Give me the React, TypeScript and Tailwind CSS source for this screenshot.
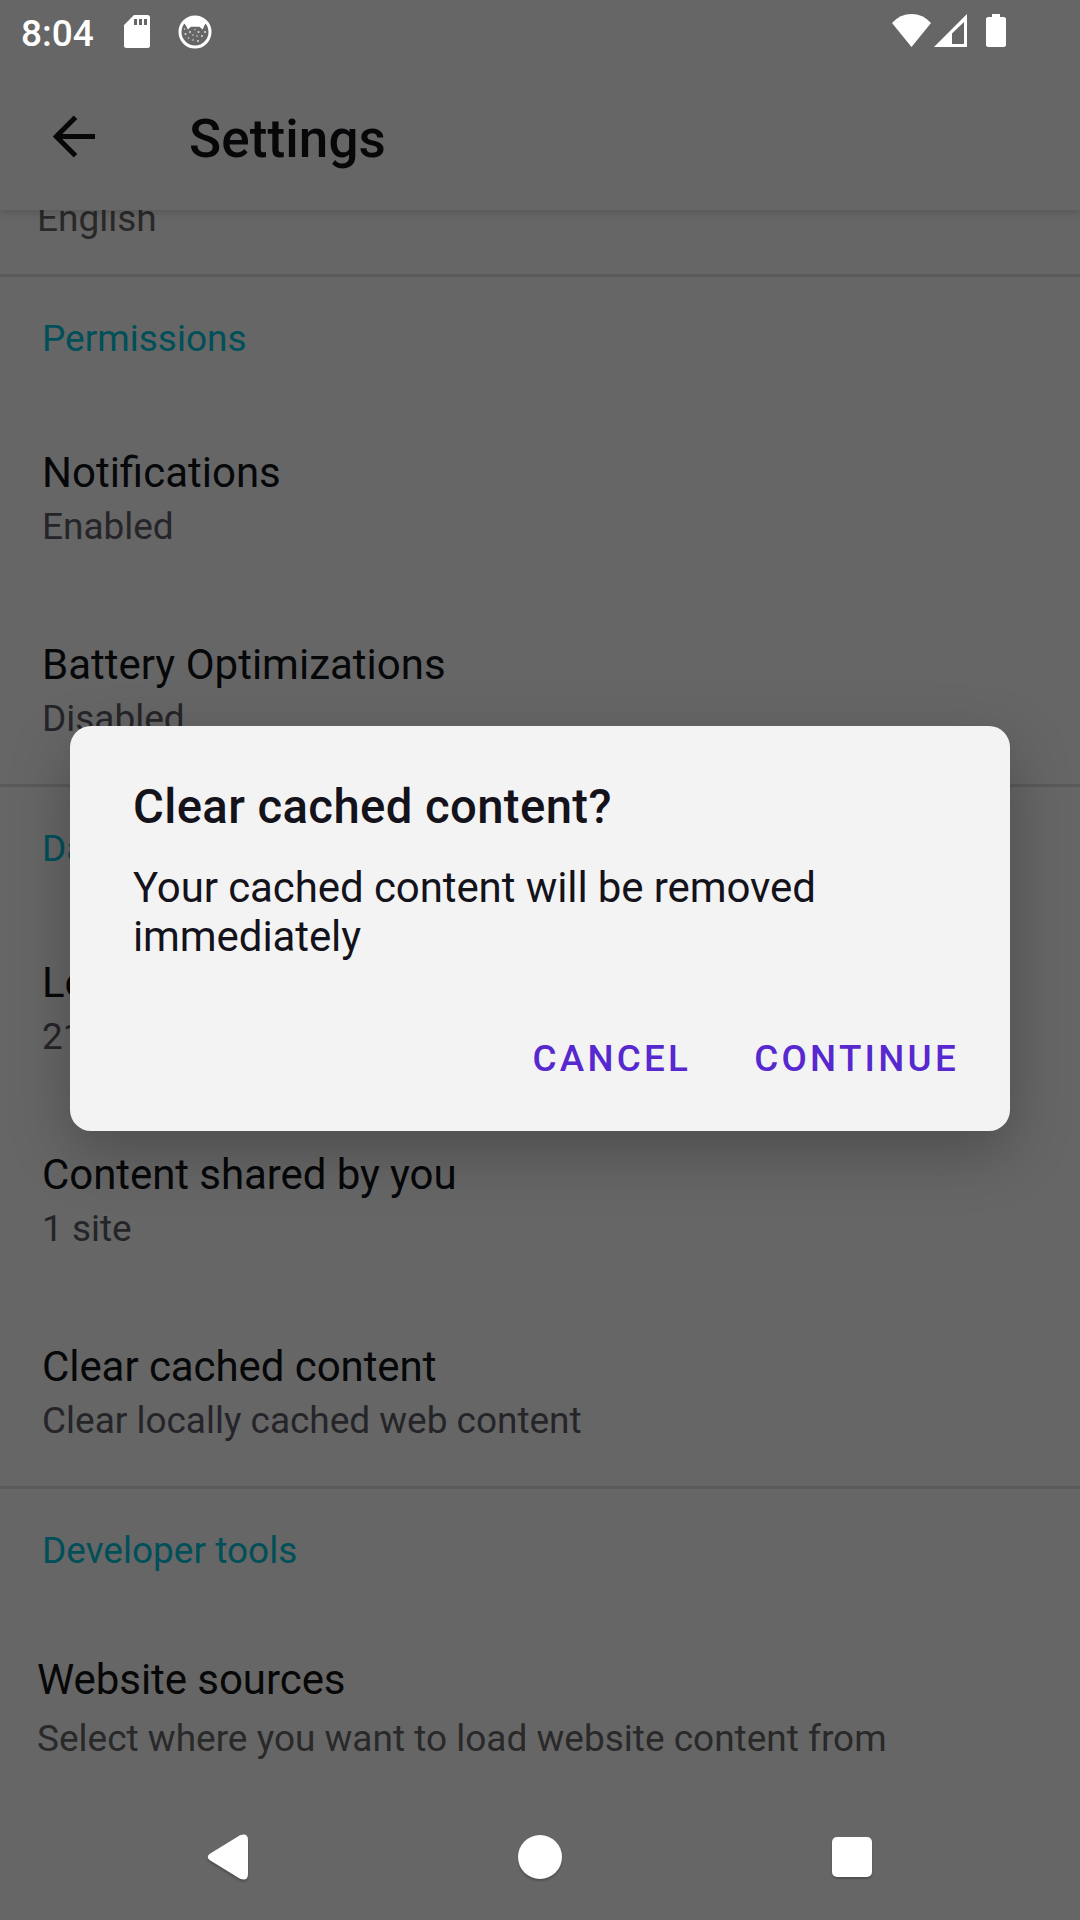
import React from "react";

type Item = { title: string; detail: string; tight?: boolean };

function Section({ label, items }: { label: string; items: Item[] }) {
  return (
    <section className="border-t-3 border-[#5a5a5a] px-[42px] pb-px">
      <h2 className="pt-10 pb-[39px] text-[37px] leading-[43px] text-[#004f59]">{label}</h2>
      {items.map((item) => (
        <div key={item.title} className="flex flex-col gap-[7px] pt-[49px] pb-[43px]">
          <div
            className={
              item.tight
                ? "text-[42px] leading-[50px] tracking-[-0.07px] text-[#060709]"
                : "text-[42px] leading-[50px] text-[#060709]"
            }
          >
            {item.title}
          </div>
          <div className="text-[37px] leading-[43px] tracking-[-0.02px] text-[#252529]">{item.detail}</div>
        </div>
      ))}
    </section>
  );
}

function StatusBar() {
  return (
    <div className="flex h-[63px] shrink-0 items-start text-white">
      <div className="w-[124px] pt-3 pl-[21px] text-[37px] leading-[43px] font-medium">8:04</div>
      <svg className="mt-[15px] h-[33px] w-[26px]" viewBox="0 0 26 33" fill="white">
        <path
          fillRule="evenodd"
          d="M10 0H23.5Q26 0 26 2.5V30.500Q26 33 23.500 33H2.500Q0 33 0 30.500V10ZM10 4V10H13V4ZM15 4V10H18V4ZM20 4V10H23V4Z"
        />
      </svg>
      <svg className="mt-[15px] ml-7 h-[34px] w-[34px]" viewBox="0 0 34 34">
        <circle cx="17" cy="17" r="15" fill="none" stroke="white" strokeWidth="3" />
        <path d="M4 8Q9 1 17 1T30 8L27.500 8.500Q26 11 24.700 14.500L21.500 11.700H13L9.800 14.500Q8.500 11 6.500 8.500Z" fill="white" />
        <g fill="white" opacity="0.75">
          <circle cx="6.500" cy="14" r=".8" /><circle cx="12" cy="17" r="1" /><circle cx="17" cy="14.500" r=".7" />
          <circle cx="20.500" cy="17" r="1" /><circle cx="27" cy="17" r="1.100" /><circle cx="7.500" cy="19" r="1" />
          <circle cx="15" cy="20" r=".8" /><circle cx="19" cy="21" r=".8" /><circle cx="24" cy="21" r="1" />
          <circle cx="10.500" cy="23" r=".8" /><circle cx="15" cy="25" r=".8" /><circle cx="20" cy="26" r="1" />
        </g>
      </svg>
      <svg className="mt-3.5 ml-auto h-[33px] w-[39px]" viewBox="0 0 39 33" fill="white">
        <path d="M0 9Q8 0 19.500 0T39 9L19.500 33Z" />
      </svg>
      <svg className="mt-3.5 ml-[3px] h-[33px] w-[33px]" viewBox="0 0 33 33" fill="white">
        <path fillRule="evenodd" d="M33 0V33H0ZM30 8L18 19.500V30H30Z" />
      </svg>
      <svg className="mt-3.5 mr-[74px] ml-[19px] h-[33px] w-5" viewBox="0 0 20 33" fill="white">
        <path d="M6 0H14V3H18.500L20 4.500V31.500L18.500 33H1.500L0 31.500V4.500L1.500 3H6Z" />
      </svg>
    </div>
  );
}

function NavigationBar() {
  return (
    <nav className="flex h-[126px] shrink-0 items-center justify-between pr-[208px] pl-[207px]">
      <svg className="h-[46px] w-[41px] overflow-visible drop-shadow-[0_2px_1px_rgba(0,0,0,0.25)]" viewBox="0 0 41 46" fill="white">
        <path d="M2.500 20L33 1.200Q41 -1.500 41 6V40Q41 47.500 33 44.800L2.500 26Q-1 23 2.500 20Z" />
      </svg>
      <div className="size-[44px] rounded-full bg-white shadow-[0_2px_2px_rgba(0,0,0,0.22)]" />
      <div className="size-10 rounded-[5px] bg-white shadow-[0_2px_2px_rgba(0,0,0,0.22)]" />
    </nav>
  );
}

function ConfirmDialog() {
  return (
    <div className="absolute inset-0 flex items-start justify-center pt-[726px]">
      <div
        role="dialog"
        className="flex h-[405px] w-[940px] flex-col rounded-[21px] bg-[#f3f3f3] pt-[53px] pr-[51px] pl-[63px] text-[#14121a] shadow-[0_20px_60px_rgba(0,0,0,0.25)]"
      >
        <h2 className="text-[47.25px] leading-[56px] font-medium tracking-[0.39px]">Clear cached content?</h2>
        <p className="mt-7 text-[42px] leading-[49px] tracking-[-0.09px]">Your cached content will be removed immediately</p>
        <div className="mt-[76px] flex justify-end gap-[63px] text-[36.75px] leading-[43px] font-medium tracking-[0.0893em] text-[#5728cf]">
          <button>CANCEL</button>
          <button>CONTINUE</button>
        </div>
      </div>
    </div>
  );
}

export default function App() {
  return (
    <div className="relative flex h-[1920px] w-[1080px] flex-col overflow-hidden bg-[#666666] font-['Roboto',sans-serif]">
      <StatusBar />
      <header className="z-10 flex h-[147px] shrink-0 items-start bg-[#666666] shadow-[0_3px_8px_rgba(0,0,0,0.15)] [clip-path:inset(0_0_-20px_0)]">
        <svg className="mt-[52px] ml-[53px] h-[43px] w-[42px]" viewBox="0 0 42 43" fill="none" stroke="#070709" strokeWidth="5">
          <path d="M42 21.500H4M22.500 2.300L3.300 21.500L22.500 40.700" />
        </svg>
        <h1 className="mt-[45px] ml-[94px] text-[53px] leading-[62px] font-medium tracking-[0.1px] text-[#070709]">Settings</h1>
      </header>
      <main className="flex min-h-0 flex-1 flex-col overflow-hidden">
        <div className="-mt-[13px] h-[77px] shrink-0 pl-[37px] text-[37px] leading-[43px] text-[#292929]">English</div>
        <Section
          label="Permissions"
          items={[
            { title: "Notifications", detail: "Enabled" },
            { title: "Battery Optimizations", detail: "Disabled" },
          ]}
        />
        <Section
          label="Data"
          items={[
            { title: "Local", detail: "21" },
            { title: "Content shared by you", detail: "1 site", tight: true },
            { title: "Clear cached content", detail: "Clear locally cached web content", tight: true },
          ]}
        />
        <Section label="Developer tools" items={[]} />
        <div className="flex flex-col gap-3 pt-[43px] pl-[37px]">
          <div className="text-[42px] leading-[50px] tracking-[-0.06px] text-[#070707]">Website sources</div>
          <div className="text-[37px] leading-[43px] text-[#292929]">Select where you want to load website content from</div>
        </div>
      </main>
      <NavigationBar />
      <ConfirmDialog />
    </div>
  );
}
